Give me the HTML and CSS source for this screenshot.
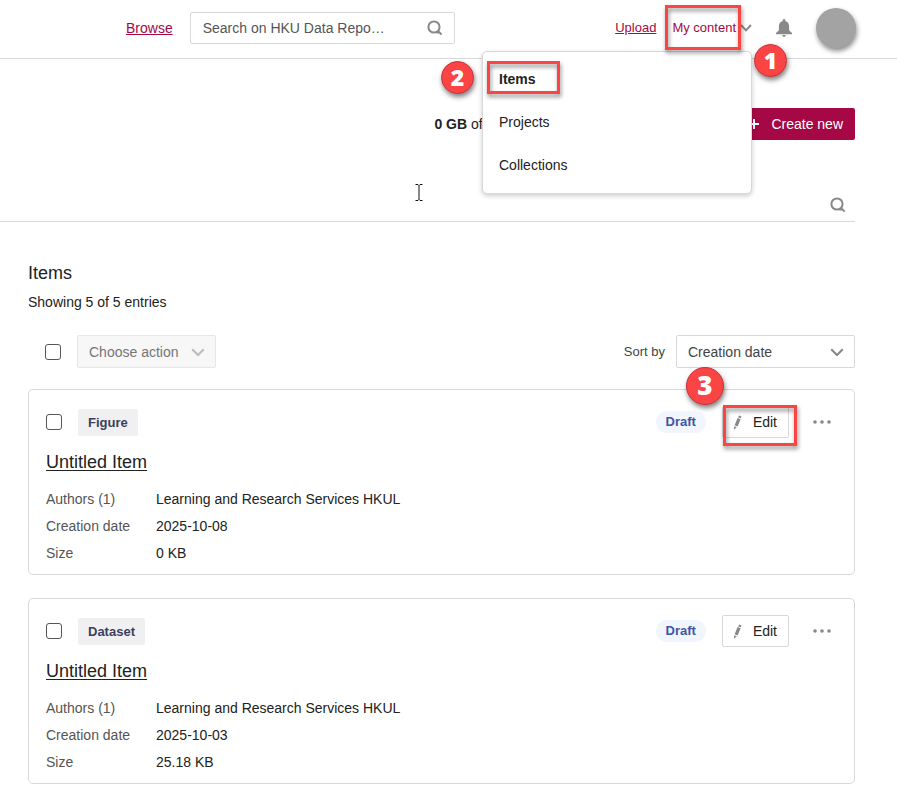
FILE: index.html
```html
<!DOCTYPE html>
<html lang="en">
<head>
  <meta charset="UTF-8">
  <title>My content - Items</title>
  <meta name="viewport" content="width=device-width, initial-scale=1">
  <link rel="stylesheet" href="styles.css">
</head>
<body>
  <!-- top bar -->
  <header class="header">
    <a class="link browse" href="#">Browse</a>
    <form class="search">
      <input type="text" aria-label="Search" placeholder="Search on HKU Data Repo…">
      <button class="icon-btn" type="button" aria-label="Search">
        <svg width="16" height="16" viewBox="0 0 16 16"><circle cx="7" cy="7" r="5.6"/><path d="M9.500 12.500h2.500M11 11l3.600 3.600"/></svg>
      </button>
    </form>

    <nav class="nav">
      <a class="link small" href="#">Upload</a>
      <div class="my-content">
        <button class="menu-btn small" type="button">
          My content
          <svg class="chevron" width="12" height="8" viewBox="0 0 12 8"><path d="M1 1l5 5.4L11 1"/></svg>
        </button>
        <span class="frame frame-menu"></span>
        <span class="step step-1">1</span>
        <div class="menu">
          <a class="current" href="#">Items<span class="frame frame-item"></span></a>
          <a href="#">Projects</a>
          <a href="#">Collections</a>
          <span class="step step-2">2</span>
        </div>
      </div>
      <button class="icon-btn bell" type="button" aria-label="Notifications">
        <svg width="16" height="20" viewBox="0 0 16 20"><path d="M8 1c.8 0 1.300.6 1.300 1.400v.5c2.400.6 3.800 2.600 3.800 5.200v4.200L16 15v1.200H0V15l2.900-2.700V8.100c0-2.600 1.400-4.600 3.800-5.200v-.5C6.700 1.600 7.200 1 8 1z"/><path d="M6.200 17h3.600c0 1.100-.8 1.800-1.800 1.800s-1.800-.7-1.800-1.800z"/></svg>
      </button>
      <span class="avatar"></span>
    </nav>
  </header>

  <main>
    <div class="quota-row">
      <div class="quota"><b>0 GB</b> of</div>
      <button class="create" type="button">
        <svg width="10" height="10" viewBox="0 0 10 10"><path d="M5 0v10M0 5h10"/></svg>
        Create new
      </button>
    </div>

    <div class="filter-bar">
      <button class="icon-btn" type="button" aria-label="Search items">
        <svg width="16" height="16" viewBox="0 0 16 16"><circle cx="7" cy="7" r="5.600"/><path d="M9.500 12.500h2.500M11 11l3.600 3.600"/></svg>
      </button>
      <svg class="caret" width="8" height="17" viewBox="0 0 8 17"><path d="M.5.5h2.500l1 1 1-1h2.500M4 1.500v14M.5 16.500h2.500l1-1 1 1h2.500"/></svg>
    </div>

    <section class="list">
      <h1>Items</h1>
      <p class="count">Showing 5 of 5 entries</p>

      <div class="toolbar">
        <input type="checkbox" aria-label="Select all">
        <div class="select action">
          <select aria-label="Choose action" disabled><option>Choose action</option></select>
          <svg class="chevron" width="14" height="9" viewBox="0 0 14 9"><path d="M1.200 1.200L7 7l5.800-5.800"/></svg>
        </div>
        <label class="sort-label" for="sort">Sort by</label>
        <div class="select sort">
          <select id="sort"><option>Creation date</option></select>
          <svg class="chevron" width="14" height="9" viewBox="0 0 14 9"><path d="M1.200 1.200L7 7l5.800-5.800"/></svg>
        </div>
      </div>

      <article class="card">
        <div class="card-top">
          <input type="checkbox" aria-label="Select figure">
          <span class="type">Figure</span>
          <span class="status">Draft</span>
          <div class="edit-wrap">
            <button class="edit" type="button">
              <svg width="9" height="15" viewBox="0 0 9 15"><path d="M6.200.6l2.300 1-.7 1.700-2.800-1.100zM4.600 3l3 1.200-3 7.300-3-1.200zM1.300 11.200l2.500 1L.8 14.700z"/></svg>
              Edit
            </button>
            <span class="frame frame-edit"></span>
            <span class="step step-3">3</span>
          </div>
          <button class="more" type="button" aria-label="More">
            <svg width="20" height="4" viewBox="0 0 20 4"><circle cx="3" cy="2" r="1.800"/><circle cx="10" cy="2" r="1.800"/><circle cx="17" cy="2" r="1.800"/></svg>
          </button>
        </div>
        <h2><a href="#">Untitled Item</a></h2>
        <dl>
          <dt>Authors (1)</dt><dd>Learning and Research Services HKUL</dd>
          <dt>Creation date</dt><dd>2025-10-08</dd>
          <dt>Size</dt><dd>0 KB</dd>
        </dl>
      </article>

      <article class="card">
        <div class="card-top">
          <input type="checkbox" aria-label="Select dataset">
          <span class="type">Dataset</span>
          <span class="status">Draft</span>
          <div class="edit-wrap">
            <button class="edit" type="button">
              <svg width="9" height="15" viewBox="0 0 9 15"><path d="M6.200.6l2.300 1-.7 1.700-2.800-1.100zM4.600 3l3 1.200-3 7.300-3-1.200zM1.300 11.200l2.500 1L.8 14.700z"/></svg>
              Edit
            </button>
          </div>
          <button class="more" type="button" aria-label="More">
            <svg width="20" height="4" viewBox="0 0 20 4"><circle cx="3" cy="2" r="1.800"/><circle cx="10" cy="2" r="1.800"/><circle cx="17" cy="2" r="1.800"/></svg>
          </button>
        </div>
        <h2><a href="#">Untitled Item</a></h2>
        <dl>
          <dt>Authors (1)</dt><dd>Learning and Research Services HKUL</dd>
          <dt>Creation date</dt><dd>2025-10-03</dd>
          <dt>Size</dt><dd>25.18 KB</dd>
        </dl>
      </article>
    </section>
  </main>
</body>
</html>
```
FILE: styles.css
```css
*{box-sizing: border-box;}
body,h1,h2,p,dl,dd{margin: 0;}
body{
  font-family: "Liberation Sans", Arial, sans-serif;
  font-size: 14px;
  line-height: 20px;
  color: #222;
  background-color: #fff;
}
button,input,select{
  margin: 0;
  font: inherit;
  color: inherit;
}
button{
  padding: 0;
  border: none;
  background: none;
  cursor: pointer;
}
svg{display: block;}
.small{font-size: 13px;}

/* top bar */
.header{
  position: relative;
  z-index: 10;
  display: flex;
  align-items: center;
  height: 59px;
  padding: 0 41px 3px 126px;
  border-bottom: 1px solid #d8d8d8;
}
.link{
  color: #a50844;
  text-decoration: underline;
}
.search{
  display: flex;
  align-items: center;
  width: 265px;
  height: 32px;
  margin-left: 17px;
  padding: 0 11px 0 12px;
  border: 1px solid #d8d8d8;
  border-radius: 2px;
}
.search input{
  flex: 1;
  min-width: 0;
  padding: 0;
  border: none;
  outline: none;
}
.search input::placeholder{
  color: #555;
  opacity: 1;
}
.icon-btn svg{
  fill: none;
  stroke: #888;
  stroke-width: 2;
}
.nav{
  display: flex;
  align-items: center;
  height: 100%;
  margin-left: auto;
}
.my-content{
  position: relative;
  margin-left: 16px;
}
.menu-btn{
  display: flex;
  align-items: center;
  gap: 4px;
  height: 20px;
  color: #a50844;
}
.chevron{
  fill: none;
  stroke: #888;
  stroke-width: 2;
}
.bell{margin-left: 24px;}
.bell svg{
  fill: #888;
  stroke: none;
}
.avatar{
  width: 40px;
  height: 40px;
  margin-left: 24px;
  border-radius: 50%;
  background-color: #a3a3a3;
  box-shadow: 1px 3px 5px rgba(0,0,0,.45);
}
.menu{
  position: absolute;
  top: 33px;
  right: 0;
  width: 270px;
  padding: 6px 0;
  border: 1px solid #d8d8d8;
  border-radius: 5px;
  background-color: #fff;
  box-shadow: 0 2px 5px rgba(0,0,0,.2);
}
.menu a{
  position: relative;
  display: block;
  padding: 0 16px;
  line-height: 43px;
  color: #222;
  text-decoration: none;
}
.menu .current{font-weight: bold;}

/* red frames and numbered steps */
.frame{
  position: absolute;
  z-index: 2;
  border: 3px solid #fb4444;
  filter: drop-shadow(1px 3px 2px rgba(0,0,0,.45));
  pointer-events: none;
}
.frame-menu{
  top: -13px;
  left: -7px;
  width: 76px;
  height: 45px;
}
.frame-item{
  top: 3px;
  left: 4px;
  width: 73px;
  height: 33px;
}
.frame-edit{
  top: -1px;
  left: 1px;
  width: 74px;
  height: 41px;
}
.step{
  position: absolute;
  z-index: 3;
  width: 33px;
  height: 33px;
  border: 1px solid #c8323a;
  border-radius: 50%;
  background-color: #fb4444;
  box-shadow: 1px 3px 5px rgba(0,0,0,.5);
  font-family: "Open Sans", sans-serif;
  font-size: 23px;
  font-weight: 800;
  line-height: 30px;
  text-align: center;
  color: #fff;
  pointer-events: none;
}
.step-1{
  top: 26px;
  right: -35px;
}
.step-2{
  top: 9px;
  left: -42px;
}
.step-3{
  top: -39px;
  left: -36px;
  width: 38px;
  height: 38px;
  font-size: 26px;
  line-height: 35px;
}

/* quota and create button */
main{padding-right: 42px;}
.quota-row{
  display: flex;
  align-items: center;
  justify-content: flex-end;
  gap: 16px;
  padding-top: 49px;
}
.quota{width: 287px;}
.create{
  display: flex;
  align-items: center;
  gap: 12px;
  height: 32px;
  padding: 0 12px;
  border-radius: 2px;
  background-color: #a50844;
  color: #fff;
}
.create svg{
  fill: none;
  stroke: #fff;
  stroke-width: 2;
}
.filter-bar{
  position: relative;
  display: flex;
  align-items: flex-end;
  justify-content: flex-end;
  height: 82px;
  padding: 0 9px 8px;
  border-bottom: 1px solid #d8d8d8;
}
.caret{
  position: absolute;
  top: 44px;
  left: 48.5%;
  fill: none;
  stroke: #111;
}

/* list of items */
.list{padding: 39px 0 16px 28px;}
h1,h2{
  font-size: 18px;
  font-weight: normal;
  line-height: 24px;
}
.count{margin-top: 7px;}
.toolbar{
  display: flex;
  align-items: center;
  margin: 23px 0 21px;
  padding-left: 17px;
}
input[type="checkbox"]{
  appearance: none;
  width: 16px;
  height: 16px;
  border: 1px solid #555;
  border-radius: 3px;
  background-color: #fff;
}
.select{position: relative;}
.select select{
  appearance: none;
  width: 100%;
  height: 33px;
  padding: 0 11px;
  border: 1px solid #d8d8d8;
  border-radius: 2px;
  background-color: #fff;
  color: #444;
}
.select .chevron{
  position: absolute;
  top: 13px;
  right: 11px;
  pointer-events: none;
}
.action{
  width: 139px;
  margin-left: 16px;
}
.action select{
  border-color: #e6e6e6;
  background-color: #f7f7f7;
  color: #757575;
  opacity: 1;
}
.action .chevron{stroke: #bbb;}
.sort-label{
  margin-left: auto;
  font-size: 13px;
  color: #444;
}
.sort{
  width: 179px;
  margin-left: 11px;
}

.card{
  padding: 16px 16px 7px 17px;
  border: 1px solid #d8d8d8;
  border-radius: 5px;
}
.card + .card{margin-top: 23px;}
.card-top{
  display: flex;
  align-items: center;
  gap: 16px;
  height: 32px;
}
.type{
  padding: 0 10px;
  border-radius: 2px;
  background-color: #f0f0f3;
  font-size: 13px;
  font-weight: bold;
  line-height: 27px;
  color: #3c3f5c;
}
.status{
  margin-left: auto;
  padding: 0 10px;
  border-radius: 11px;
  background-color: #f1f5fe;
  font-size: 13px;
  font-weight: bold;
  line-height: 22px;
  color: #3f55a5;
}
.edit-wrap{position: relative;}
.edit{
  display: flex;
  align-items: center;
  gap: 11px;
  height: 32px;
  padding: 0 11px 0 10px;
  border: 1px solid #d8d8d8;
  border-radius: 2px;
}
.edit svg{fill: #888;}
.more{
  width: 33px;
  height: 32px;
}
.more svg{
  margin: 0 auto;
  fill: #888;
}
h2{margin: 12px 0;}
h2 a{
  color: #222;
  text-underline-offset: 2px;
}
dl{
  display: grid;
  grid-template-columns: 110px 1fr;
  line-height: 27px;
}
dt{color: #555;}
```
